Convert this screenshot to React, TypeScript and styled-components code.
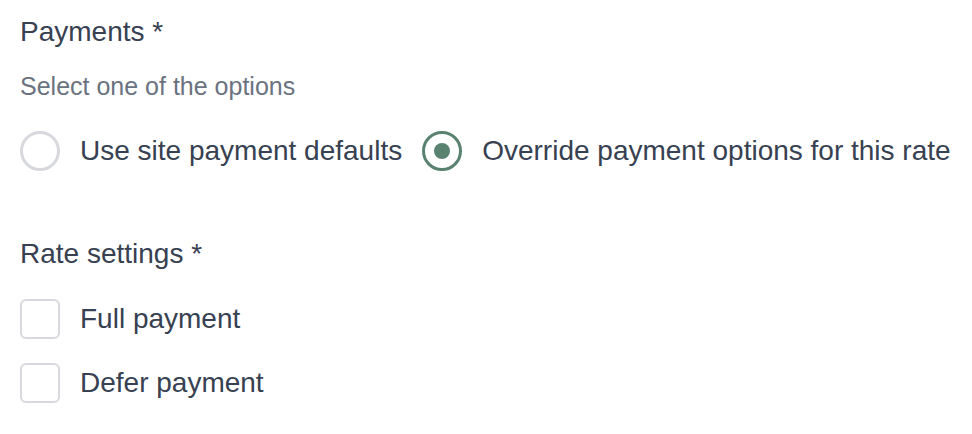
import React, { useState } from "react";
import styled, { createGlobalStyle } from "styled-components";

const Global = createGlobalStyle`
  html, body { margin: 0; padding: 0; background: #ffffff; }
  body { font-family: "Liberation Sans", Arial, Helvetica, sans-serif; color: #374151; }
  * { box-sizing: border-box; }
`;

const Page = styled.div`
  padding: 12px 20px 10px;
  display: flex;
  flex-direction: column;
`;

const Group = styled.div<{ $top?: number }>`
  display: flex;
  flex-direction: column;
  margin-top: ${(p) => p.$top ?? 0}px;
`;

const Legend = styled.div`
  font-size: 28px;
  line-height: 40px;
  color: #374151;
  white-space: nowrap;
`;

const Helper = styled.div`
  font-size: 25px;
  line-height: 32px;
  color: #6b7280;
  margin-top: 18px;
  white-space: nowrap;
`;

const RadioRow = styled.div`
  display: flex;
  align-items: center;
  gap: 20px;
  margin-top: 29px;
`;

const Option = styled.label`
  display: flex;
  align-items: center;
  gap: 20px;
  cursor: pointer;
  font-size: 28px;
  line-height: 40px;
  color: #374151;
  white-space: nowrap;
  flex: none;
`;

const RadioCircle = styled.span<{ $checked: boolean }>`
  width: 40px;
  height: 40px;
  flex: none;
  border-radius: 50%;
  border: 3.5px solid ${(p) => (p.$checked ? "#5a8270" : "#d8d9de")};
  display: flex;
  align-items: center;
  justify-content: center;
  &::after {
    content: "";
    width: 16px;
    height: 16px;
    border-radius: 50%;
    background: #5a8270;
    display: ${(p) => (p.$checked ? "block" : "none")};
  }
`;

const CheckList = styled.div`
  display: flex;
  flex-direction: column;
  gap: 24px;
  margin-top: 25px;
`;

const CheckBox = styled.span<{ $checked: boolean }>`
  width: 40px;
  height: 40px;
  flex: none;
  border-radius: 6px;
  border: 2.5px solid ${(p) => (p.$checked ? "#5a8270" : "#d8d9de")};
  background: ${(p) => (p.$checked ? "#5a8270" : "#ffffff")};
`;

export default function App() {
  const [choice, setChoice] = useState("override");
  const [checks, setChecks] = useState<Record<string, boolean>>({ full: false, defer: false });

  const radios = [
    { id: "defaults", label: "Use site payment defaults" },
    { id: "override", label: "Override payment options for this rate" },
  ];
  const boxes = [
    { id: "full", label: "Full payment" },
    { id: "defer", label: "Defer payment" },
  ];

  return (
    <Page>
      <Global />
      <Group>
        <Legend>Payments *</Legend>
        <Helper>Select one of the options</Helper>
        <RadioRow>
          {radios.map((r) => (
            <Option key={r.id} onClick={() => setChoice(r.id)}>
              <RadioCircle $checked={choice === r.id} />
              {r.label}
            </Option>
          ))}
        </RadioRow>
      </Group>
      <Group $top={63}>
        <Legend>Rate settings *</Legend>
        <CheckList>
          {boxes.map((b) => (
            <Option
              key={b.id}
              onClick={() => setChecks((c) => ({ ...c, [b.id]: !c[b.id] }))}
            >
              <CheckBox $checked={checks[b.id]} />
              {b.label}
            </Option>
          ))}
        </CheckList>
      </Group>
    </Page>
  );
}
